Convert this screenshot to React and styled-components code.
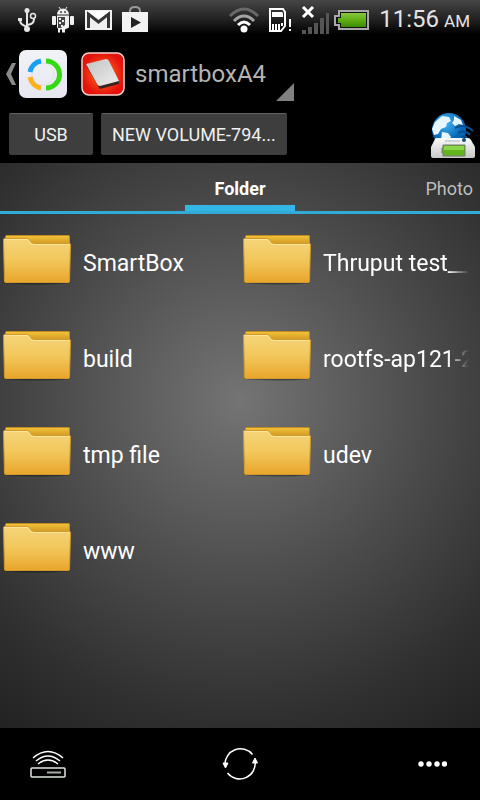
import React, {useState} from 'react';
import styled, {createGlobalStyle} from 'styled-components';

const GlobalStyle = createGlobalStyle`
    * {
        box-sizing: border-box;
    }

    body {
        margin: 0;
        background: #000;
        color: #fff;
        font-family: Roboto, "Liberation Sans", sans-serif;
    }

    button {
        margin: 0;
        padding: 0;
        border: 0;
        background: none;
        color: inherit;
        font: inherit;
        cursor: pointer;
    }

    svg {
        display: block;
        flex: none;
    }
`;

const Screen = styled.div`
    display: flex;
    flex-direction: column;
    min-height: 100vh;
`;

const StatusBar = styled.div`
    display: flex;
    align-items: center;
    justify-content: space-between;
    height: 38px;
    padding: 2px 10px 0 16px;
    background: linear-gradient(#464646, #222 50%, #000 90%);
`;

const StatusGroup = styled.div`
    display: flex;
    align-items: center;
    gap: ${({$gap}) => $gap}px;
`;

const Clock = styled.time`
    margin-left: 5px;
    color: #e4e4e4;
    font-size: 24px;
    line-height: 36px;
    white-space: nowrap;

    small {
        margin-left: 5px;
        font-size: 17px;
    }
`;

const ActionBar = styled.header`
    display: flex;
    align-items: center;
    height: 72px;
    padding-left: 6px;
`;

const HomeButton = styled.button`
    display: flex;
    align-items: center;
    gap: 2px;
    margin-right: 14px;
`;

const TitleButton = styled.button`
    display: flex;
    align-items: center;
    gap: 10px;
    color: #b4b4b4;
    font-size: 24px;
    line-height: 50px;
`;

const DropCorner = styled.span`
    align-self: flex-end;
    width: 18px;
    height: 18px;
    margin-bottom: -2px;
    background: #808080;
    clip-path: polygon(100% 0, 100% 100%, 0 100%);
`;

const VolumeBar = styled.nav`
    display: flex;
    align-items: flex-start;
    gap: 8px;
    height: 53px;
    padding: 3px 4px 4px 9px;
`;

const VolumeButton = styled.button`
    && {
        height: 42px;
        padding: 0 11px;
        min-width: 84px;
        border-top: 1px solid #636363;
        border-radius: 2px;
        background: #3e3e3e;
        color: #f0f0f0;
        font-size: 18px;
    }
`;

const DiskButton = styled.button`
    && {
        align-self: flex-end;
        margin-left: auto;
    }
`;

const Browser = styled.main`
    flex: 1;
    background: radial-gradient(circle farthest-corner at 50% 42%, #747474, #4c4c4c 45%, #303030 78%, #222);
`;

const Tabs = styled.div`
    display: grid;
    grid-template-columns: 1fr 110px 1fr;
    height: 51px;
    border-bottom: 3px solid #33a9d8;
`;

const Tab = styled.button`
    && {
        grid-column: ${({$column}) => $column};
        padding-right: ${({$column}) => ($column === 3 ? 7 : 0)}px;
        padding-top: ${({$active}) => ($active ? 9 : 3)}px;
        border-bottom: ${({$active}) => ($active ? '6px solid #33b5e5' : '0')};
        color: ${({$active}) => ($active ? '#fff' : '#bdbdbd')};
        font-size: 18px;
        font-weight: ${({$active}) => ($active ? 700 : 400)};
        text-align: ${({$column}) => ($column === 3 ? 'right' : 'center')};
    }
`;

const FolderGrid = styled.div`
    display: grid;
    grid-template-columns: 1fr 1fr;
    grid-auto-rows: 96px;
`;

const FolderItem = styled.button`
    && {
        display: flex;
        align-items: center;
        gap: 11px;
        min-width: 0;
        padding: 2px 9px 0 2px;
        font-size: 23px;
        text-align: left;
    }
`;

const FolderName = styled.span`
    flex: 1;
    overflow: hidden;
    padding-top: 2px;
    line-height: 32px;
    white-space: nowrap;
    mask-image: ${({$long}) => ($long ? 'linear-gradient(to left, transparent 2px, #000 24px)' : 'none')};
`;

const BottomBar = styled.footer`
    display: flex;
    align-items: center;
    justify-content: space-between;
    height: 72px;
    padding: 0 28px;
`;

const BarButton = styled.button`
    && {
        display: flex;
        justify-content: center;
        width: 40px;
    }
`;

const UsbIcon = () => (
    <svg width="25" height="26" viewBox="-1 0 25 26" fill="none" stroke="#e6e6e6" strokeWidth="2">
        <path d="M10 5v16M10 20C6 18 3 17 3 13M10 18c5-1 7-2 7-6"/>
        <circle cx="10" cy="3.500" r="2.500" fill="#e6e6e6" stroke="none"/>
        <circle cx="10" cy="22" r="3" fill="#e6e6e6" stroke="none"/>
        <circle cx="16" cy="9" r="2.500" strokeWidth="1.500"/>
        <path d="M1 11h4v3H1z" fill="#e6e6e6" stroke="none"/>
    </svg>
);

const DebugIcon = () => (
    <svg width="24" height="28" viewBox="0 0 24 28" fill="#f0f0f0">
        <path d="M6 8.500a6 6 0 0 1 12 0zM6 9.500h12v12l-4 2v3h-3v-3H9v3H7v-4l-1-1z"/>
        <path d="M8 1l2 3M16 1l-2 3" stroke="#f0f0f0"/>
        <rect x="1" y="10" width="4" height="9" rx="1"/>
        <rect x="19" y="10" width="4" height="9" rx="1"/>
        <path d="M7 11h7v8l-4 3H7z" fill="#444"/>
        <path d="M8 12h2v2H8zM11 14h2v2h-2zM8 16h2v2H8zM10 19h2v2h-2z"/>
        <circle cx="10" cy="6" r="1" fill="#444"/>
        <circle cx="14" cy="6" r="1" fill="#444"/>
    </svg>
);

const MailIcon = () => (
    <svg width="27" height="22" viewBox="0 0 27 22">
        <path d="M0 1h27v20H0z" fill="#f0f0f0"/>
        <path d="M3.500 19V5L13.500 13l10-8v14" fill="none" stroke="#353535" strokeWidth="3"/>
        <path d="M2 2h23l-11.500 8z" fill="#fff"/>
    </svg>
);

const StoreIcon = () => (
    <svg width="26" height="28" viewBox="0 0 26 28">
        <path d="M8 8V5q0-4 5-4t5 4v3" fill="none" stroke="#999" strokeWidth="2"/>
        <path d="M0 6h26v20H0z" fill="#f2f2f2"/>
        <path d="M9 11v11l10-5.500z" fill="#222"/>
    </svg>
);

const WifiIcon = () => (
    <svg width="34" height="26" viewBox="0 0 34 26" fill="none" strokeWidth="3">
        <path d="M1 9q14-14 28 0" stroke="#686868"/>
        <path d="M5 14q10-10 20 0" stroke="#a5a5a5"/>
        <path d="M9 18q6-6 12 0" stroke="#fff"/>
        <circle cx="15" cy="22" r="3.500" fill="#fff"/>
    </svg>
);

const CardIcon = () => (
    <svg width="26" height="26" viewBox="0 0 26 26">
        <path d="M2 2h13l2 3v14l-4 5H2z" fill="none" stroke="#fff" strokeWidth="2"/>
        <path d="M4 5h10l1 1v4H4zM4 17h2v6H4zM7 17h2v6H7zM10 17h2v6h-2zM13 16h2v3h-2z" fill="#fff"/>
        <path d="M21 12h2v8h-2zM21 22h2v2h-2z" fill="#fff"/>
    </svg>
);

const SignalIcon = () => (
    <svg width="30" height="30" viewBox="-3 1 30 30">
        <path d="M0 26h4v4H0zM6 23h4v7H6zM12 19h4v11h-4zM18 14h4v16h-4zM24 9h3v21h-3z" fill="#555"/>
        <path d="M1 3l10 10M11 3L1 13" stroke="#fff" strokeWidth="3"/>
    </svg>
);

const BatteryIcon = () => (
    <svg width="35" height="20" viewBox="0 0 35 20">
        <defs>
            <linearGradient id="charge" x2="0" y2="1">
                <stop stopColor="#86c83e"/>
                <stop offset=".5" stopColor="#5fae14"/>
                <stop offset="1" stopColor="#3c8a00"/>
            </linearGradient>
        </defs>
        <path d="M5 1h29v18H5v-4H1V6h4z" fill="#111" stroke="#a9a9a9" strokeWidth="2"/>
        <path d="M7 3h25v14H7v-4H4V8h3z" fill="url(#charge)"/>
    </svg>
);

const AppIcon = () => (
    <svg width="48" height="48" viewBox="0 0 48 48">
        <defs>
            <linearGradient id="tile" x2="0" y2="1">
                <stop stopColor="#f2f3f7"/>
                <stop offset="1" stopColor="#e6e7f0"/>
            </linearGradient>
        </defs>
        <rect width="48" height="48" rx="7" fill="url(#tile)"/>
        <circle cx="24" cy="24" r="11" fill="none" stroke="#e0e1e8"/>
        <g fill="none" strokeWidth="5">
            <path d="M22 11A13.500 13.500 0 0 0 11 22" stroke="#18a0f5"/>
            <path d="M11 27A13.500 13.500 0 0 0 22 38" stroke="#fbb01c"/>
            <path d="M27 11A13.500 13.500 0 0 1 27 38" stroke="#35d911"/>
        </g>
    </svg>
);

const DriveIcon = () => (
    <svg width="44" height="44" viewBox="0 0 44 44">
        <defs>
            <radialGradient id="red">
                <stop stopColor="#ff7418"/>
                <stop offset=".6" stopColor="#f23a12"/>
                <stop offset="1" stopColor="#e3120c"/>
            </radialGradient>
            <linearGradient id="metal" x2="1" y2="1">
                <stop stopColor="#c2c2c2"/>
                <stop offset="1" stopColor="#eee"/>
            </linearGradient>
        </defs>
        <rect x="1" y="1" width="42" height="42" rx="7" fill="url(#red)" stroke="#f5d5cf" strokeWidth="1.500"/>
        <path d="M5 13l12 21 2 3 19-5v-3z" fill="#3a2420"/>
        <path d="M5 12L25 7q2 0 3 2l10 20-19 5q-2 0-3-2z" fill="url(#metal)"/>
    </svg>
);

const NetworkDiskIcon = () => (
    <svg width="46" height="46" viewBox="0 0 46 46">
        <defs>
            <radialGradient id="sea" cx=".4" cy=".3">
                <stop stopColor="#42b5f2"/>
                <stop offset="1" stopColor="#0866b5"/>
            </radialGradient>
            <linearGradient id="shell" x2="0" y2="1">
                <stop stopColor="#fafafa"/>
                <stop offset="1" stopColor="#c8c8c8"/>
            </linearGradient>
        </defs>
        <circle cx="19" cy="17" r="17" fill="url(#sea)"/>
        <path d="M5 9l7-6 7 1 2 4-4 2-1 4-5 2-3 5-4 1-2-6zM24 3l7 4 2 5-4-1-4 2-3-3 2-3zM12 19l6 1 3 4-4 6-6-3z" fill="#e5f6ff"/>
        <path d="M25 15q9-5 18 3M28 20q7-4 12 2M31 24q4-2 6 1" fill="none" stroke="#0b4e90" strokeWidth="2"/>
        <path d="M5 26q0-1 2-1h31q2 0 3 2l4 7v9q0 2-2 2H3q-2 0-2-2v-9z" fill="url(#shell)"/>
        <circle cx="34" cy="27" r="2" fill="#0b4e90"/>
        <path d="M15 28h15" stroke="#aab5c2"/>
        <path d="M13 32h22v11H13v-3h-1v-5h1z" fill="#62b51e" stroke="#777"/>
        <path d="M14 33h20v4H14z" fill="#8bd548"/>
    </svg>
);

const FolderIcon = () => (
    <svg width="70" height="60" viewBox="0 0 70 60">
        <defs>
            <linearGradient id="back" x2="0" y2="1">
                <stop stopColor="#f3c23a"/>
                <stop offset="1" stopColor="#c68b1c"/>
            </linearGradient>
            <linearGradient id="front" x2="0" y2="1">
                <stop stopColor="#f5d57a"/>
                <stop offset=".5" stopColor="#f2c65a"/>
                <stop offset="1" stopColor="#e9a52c"/>
            </linearGradient>
        </defs>
        <path d="M2 49h66v1q-30 3-66 0z" fill="#000" opacity=".35"/>
        <path d="M3.500 3.500q0-1 1-1h62q1 0 1 1V14h-64z" fill="url(#back)" stroke="#c08a20"/>
        <path d="M1.500 6.500q0-1 1-1h22q3 0 4 3 1 2 4 2h35q1 0 1 1l-1 37q0 1-1 1h-63q-1 0-1-1z" fill="url(#front)" stroke="#d19a2b"/>
        <path d="M3 6.500h22q2 0 3 3 1 2 4 2h35" fill="none" stroke="#fbe39a"/>
    </svg>
);

const RouterIcon = () => (
    <svg width="36" height="28" viewBox="0 0 36 28" fill="none" stroke="#e0e6e0" strokeWidth="1.500">
        <rect x="1" y="18" width="34" height="9" rx="1"/>
        <path d="M17 22.500h14" stroke="#a4ada4" strokeWidth="2"/>
        <path d="M3 8Q18-5 33 8M6 11Q18 1 30 11M8 14Q18 6 28 14" stroke="#fff"/>
    </svg>
);

const RefreshIcon = () => (
    <svg width="36" height="36" viewBox="0 0 36 36" fill="none" stroke="#fff" strokeWidth="1.500">
        <path d="M30.500 8.500A15.500 15.500 0 0 0 3 19M5.500 27A15.500 15.500 0 0 0 33 15"/>
        <path d="M1 17h5l-2.500 5zM30.500 17h5L33 12z" fill="#fff" strokeWidth="1"/>
    </svg>
);

const MoreIcon = () => (
    <svg width="30" height="8" viewBox="-1 0 30 8" fill="#fff">
        <circle cx="3" cy="4" r="2.700"/>
        <circle cx="11" cy="4" r="2.700"/>
        <circle cx="19" cy="4" r="2.700"/>
        <circle cx="26.500" cy="4" r="2.700"/>
    </svg>
);

const folders = [
    {name: 'SmartBox'},
    {name: 'Thruput test___', long: true},
    {name: 'build'},
    {name: 'rootfs-ap121-2', long: true},
    {name: 'tmp file'},
    {name: 'udev'},
    {name: 'www'},
];

export default function App() {
    const [tab, setTab] = useState('Folder');

    return (
        <Screen>
            <GlobalStyle/>
            <StatusBar>
                <StatusGroup $gap={10}>
                    <UsbIcon/>
                    <DebugIcon/>
                    <MailIcon/>
                    <StoreIcon/>
                </StatusGroup>
                <StatusGroup $gap={5}>
                    <WifiIcon/>
                    <CardIcon/>
                    <SignalIcon/>
                    <BatteryIcon/>
                    <Clock>11:56<small>AM</small></Clock>
                </StatusGroup>
            </StatusBar>
            <ActionBar>
                <HomeButton aria-label="Back">
                    <svg width="11" height="22" viewBox="0 0 11 22">
                        <path d="M6 0h4L5 11l5 11H6L0 11z" fill="#8a8a8a"/>
                    </svg>
                    <AppIcon/>
                </HomeButton>
                <TitleButton>
                    <DriveIcon/>
                    <span>smartboxA4</span>
                    <DropCorner/>
                </TitleButton>
            </ActionBar>
            <VolumeBar>
                <VolumeButton>USB</VolumeButton>
                <VolumeButton>NEW VOLUME-794...</VolumeButton>
                <DiskButton aria-label="Network disk"><NetworkDiskIcon/></DiskButton>
            </VolumeBar>
            <Browser>
                <Tabs role="tablist">
                    <Tab role="tab" aria-selected={tab === 'Folder'} $column={2} $active={tab === 'Folder'} onClick={() => setTab('Folder')}>Folder</Tab>
                    <Tab role="tab" aria-selected={tab === 'Photo'} $column={3} $active={tab === 'Photo'} onClick={() => setTab('Photo')}>Photo</Tab>
                </Tabs>
                <FolderGrid>
                    {folders.map(({name, long}) => (
                        <FolderItem key={name}>
                            <FolderIcon/>
                            <FolderName $long={long}>{name}</FolderName>
                        </FolderItem>
                    ))}
                </FolderGrid>
            </Browser>
            <BottomBar>
                <BarButton aria-label="Router"><RouterIcon/></BarButton>
                <BarButton aria-label="Refresh"><RefreshIcon/></BarButton>
                <BarButton aria-label="More"><MoreIcon/></BarButton>
            </BottomBar>
        </Screen>
    )
}
